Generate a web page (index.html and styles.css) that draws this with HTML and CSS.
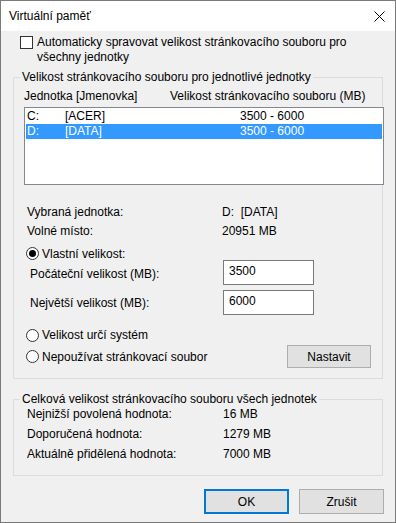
FILE: index.html
```html
<!DOCTYPE html>
<html>
<head>
  <title>Virtuální paměť</title>
  <link rel="stylesheet" href="styles.css">
</head>
<body>
  <div class="window">
    <div class="titlebar">
      <span class="title">Virtuální paměť</span>
      <span class="close">
        <svg width="11" height="11" viewBox="0 0 11 11"><path d="M0.5 0.5 L10.5 10.5 M10.5 0.5 L0.5 10.5" stroke="#000" stroke-width="1" fill="none"/></svg>
      </span>
    </div>
    <div class="content">
      <label class="auto">
        <span class="checkbox"></span>
        <span class="auto-text">Automaticky spravovat velikost stránkovacího souboru pro všechny jednotky</span>
      </label>

      <fieldset class="group group-drives">
        <legend>Velikost stránkovacího souboru pro jednotlivé jednotky</legend>
        <div class="list-head">
          <span class="col-drive">Jednotka [Jmenovka]</span>
          <span>Velikost stránkovacího souboru (MB)</span>
        </div>
        <div class="listbox">
          <div class="list-row">
            <span class="c-letter">C:</span><span class="c-label">[ACER]</span><span>3500 - 6000</span>
          </div>
          <div class="list-row selected">
            <span class="c-letter">D:</span><span class="c-label">[DATA]</span><span>3500 - 6000</span>
          </div>
        </div>

        <div class="info-row first">
          <span class="info-label">Vybraná jednotka:</span><span>D:&nbsp; [DATA]</span>
        </div>
        <div class="info-row">
          <span class="info-label">Volné místo:</span><span>20951 MB</span>
        </div>

        <div class="radio-row custom">
          <span class="radio checked"></span>Vlastní velikost:
        </div>
        <div class="size-row initial">
          <span class="size-label">Počáteční velikost (MB):</span>
          <span class="textbox">3500</span>
        </div>
        <div class="size-row maximum">
          <span class="size-label">Největší velikost (MB):</span>
          <span class="textbox">6000</span>
        </div>

        <div class="radio-row system">
          <span class="radio"></span>Velikost určí systém
        </div>
        <div class="radio-row none">
          <span class="radio"></span>Nepoužívat stránkovací soubor
          <button class="btn set-btn">Nastavit</button>
        </div>
      </fieldset>

      <fieldset class="group group-total">
        <legend>Celková velikost stránkovacího souboru všech jednotek</legend>
        <div class="total-row"><span class="total-label">Nejnižší povolená hodnota:</span><span>16 MB</span></div>
        <div class="total-row"><span class="total-label">Doporučená hodnota:</span><span>1279 MB</span></div>
        <div class="total-row"><span class="total-label">Aktuálně přidělená hodnota:</span><span>7000 MB</span></div>
      </fieldset>

      <div class="buttons">
        <button class="btn default">OK</button>
        <button class="btn">Zrušit</button>
      </div>
    </div>
  </div>
</body>
</html>
```

FILE: styles.css
```css
body {
  margin: 0;
  font-family: "Liberation Sans", Arial, sans-serif;
  font-size: 12px;
  color: #000;
}
.window {
  width: 396px;
  height: 523px;
  box-sizing: border-box;
  border: 1px solid #7a7a7a;
  background-color: #f0f0f0;
}
.titlebar {
  height: 30px;
  background-color: #fff;
  display: flex;
  align-items: center;
  justify-content: space-between;
  padding-left: 8px;
}
.close {
  width: 32px;
  height: 30px;
  display: flex;
  align-items: center;
  justify-content: center;
}
.content {
  padding: 0 12px;
}
.auto {
  display: flex;
  align-items: flex-start;
  margin: 4px 0 0 7px;
  line-height: 15px;
}
.checkbox {
  width: 13px;
  height: 13px;
  box-sizing: border-box;
  border: 1px solid #333;
  background-color: #fff;
  margin-top: 1px;
  flex: none;
}
.auto-text {
  margin-left: 4px;
  margin-right: 14px;
}

/* group boxes */
.group {
  margin: 6px 0 0 0;
  padding: 0 0 10px 6px;
  border: 1px solid #dcdcdc;
  min-width: 0;
}
.group legend {
  padding: 0 2px;
  line-height: 12px;
}
.group-total {
  margin-top: 15px;
  padding-bottom: 11px;
}
.group-total legend {
  line-height: 10px;
}

.list-head {
  display: flex;
  margin-top: 5px;
  padding-left: 4px;
  line-height: 16px;
}
.col-drive {
  width: 146px;
}
.listbox {
  margin: 3px 0 0 4px;
  width: 360px;
  height: 78px;
  box-sizing: border-box;
  border: 1px solid #828790;
  background-color: #fff;
  padding: 1px;
}
.list-row {
  display: flex;
  height: 15px;
  line-height: 15px;
  padding-left: 1px;
}
.list-row.selected {
  background-color: #3399ff;
  color: #fff;
}
.c-letter {
  width: 38px;
}
.c-label {
  width: 175px;
}

.info-row {
  display: flex;
  padding-left: 7px;
  line-height: 16px;
  margin-top: 3px;
}
.info-row.first {
  margin-top: 19px;
}
.info-label {
  width: 195px;
}

.radio-row {
  display: flex;
  align-items: center;
  padding-left: 6px;
  line-height: 16px;
}
.radio {
  width: 13px;
  height: 13px;
  box-sizing: border-box;
  border: 1px solid #333;
  border-radius: 50%;
  background-color: #fff;
  margin-right: 3px;
  position: relative;
}
.radio.checked::after {
  content: "";
  position: absolute;
  left: 2px;
  top: 2px;
  width: 7px;
  height: 7px;
  border-radius: 50%;
  background-color: #000;
}
.radio-row.custom {
  margin-top: 8px;
  height: 13px;
}
.radio-row.system {
  margin-top: 12px;
}
.radio-row.none {
  margin-top: 2px;
  height: 23px;
}

.size-row {
  display: flex;
  align-items: flex-start;
  padding-left: 10px;
  line-height: 16px;
}
.size-row.maximum {
  margin-top: 5px;
}
.size-label {
  width: 193px;
  padding-top: 6px;
}
.size-row.maximum .size-label {
  padding-top: 5px;
}
.textbox {
  width: 91px;
  height: 25px;
  box-sizing: border-box;
  border: 1px solid #7a7a7a;
  background-color: #fff;
  padding: 2px 5px 0;
}

.btn {
  font-family: inherit;
  font-size: 12px;
  color: #000;
  width: 85px;
  height: 25px;
  padding: 0;
  background-color: #e1e1e1;
  border: 1px solid #adadad;
}
.btn.default {
  border: 2px solid #0078d7;
}
.set-btn {
  width: 84px;
  height: 23px;
  margin-left: auto;
  margin-right: 11px;
}
.total-row {
  display: flex;
  padding-left: 7px;
  line-height: 20px;
}
.total-label {
  width: 196px;
}
.buttons {
  display: flex;
  justify-content: flex-end;
  gap: 10px;
  margin: 13px -1px 0 0;
}
```
